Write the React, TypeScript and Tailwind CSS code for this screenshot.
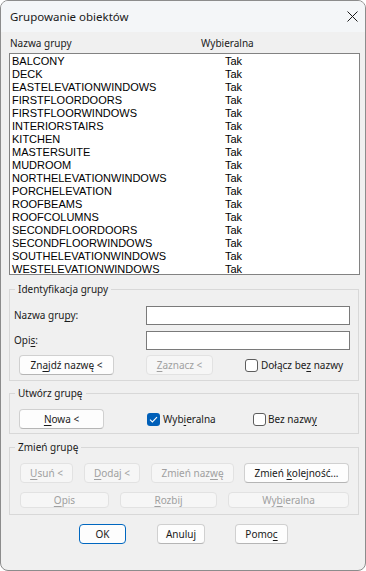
import type { ReactNode } from 'react';

const groups = [
  'BALCONY',
  'DECK',
  'EASTELEVATIONWINDOWS',
  'FIRSTFLOORDOORS',
  'FIRSTFLOORWINDOWS',
  'INTERIORSTAIRS',
  'KITCHEN',
  'MASTERSUITE',
  'MUDROOM',
  'NORTHELEVATIONWINDOWS',
  'PORCHELEVATION',
  'ROOFBEAMS',
  'ROOFCOLUMNS',
  'SECONDFLOORDOORS',
  'SECONDFLOORWINDOWS',
  'SOUTHELEVATIONWINDOWS',
  'WESTELEVATIONWINDOWS',
];

const U = ({ children }: { children: ReactNode }) => (
  <span className="underline underline-offset-[2px]">{children}</span>
);

function Button({
  children,
  className = '',
  disabled,
  primary,
}: {
  children: ReactNode;
  className?: string;
  disabled?: boolean;
  primary?: boolean;
}) {
  const tone = disabled
    ? 'border-[#e2e2e2] bg-[#f6f6f6] text-[#a0a0a0]'
    : primary
      ? 'border-[#0067c0] bg-[#fdfdfd] text-[#1a1a1a]'
      : 'border-[#d0d0d0] border-b-[#b5b5b5] bg-[#fdfdfd] text-[#1a1a1a]';
  return (
    <div className={`flex shrink-0 items-center justify-center rounded-[4px] border leading-none ${tone} ${className}`}>
      <span>{children}</span>
    </div>
  );
}

function Checkbox({ checked }: { checked?: boolean }) {
  return checked ? (
    <div className="flex h-[13px] w-[13px] shrink-0 items-center justify-center rounded-[3px] bg-[#005fb8]">
      <svg width="9" height="7" viewBox="0 0 9 7" fill="none">
        <path d="M1 3.6 L3.4 6 L8 1.2" stroke="white" strokeWidth="1.1" />
      </svg>
    </div>
  ) : (
    <div className="h-[13px] w-[13px] shrink-0 rounded-[3px] border border-[#5d5d5d] bg-white" />
  );
}

function Group({ title, className, children }: { title: string; className: string; children: ReactNode }) {
  return (
    <div className={`relative w-[350px] border border-[#d8d8d8] ${className}`}>
      <span className="absolute left-[5px] top-[-9px] bg-[#f0f0f0] px-[3px] leading-[16px]">{title}</span>
      {children}
    </div>
  );
}

export default function App() {
  return (
    <div className="h-[571px] w-[366px] bg-white font-['Noto_Sans',sans-serif] text-[10px] text-[#1a1a1a]">
      <div className="flex h-full flex-col overflow-hidden rounded-[8px] border border-[#8c8c8c] bg-[#f0f0f0]">
        <div className="flex h-[31px] shrink-0 items-center justify-between bg-[#f4f6f8] pl-[9px] pr-[7px]">
          <span className="text-[11.5px]">Grupowanie obiektów</span>
          <svg width="11" height="11" viewBox="0 0 11 11" fill="none">
            <path d="M0.5 0.5 L10.5 10.5 M10.5 0.5 L0.5 10.5" stroke="#1a1a1a" strokeWidth="1" />
          </svg>
        </div>

        <div className="flex-1 pl-[8px] pt-[2px]">
          <div className="grid h-[19px] grid-cols-[191px_1fr] items-center pl-[1px]">
            <span>Nazwa grupy</span>
            <span>Wybieralna</span>
          </div>

          <div className="h-[222px] w-[351px] border border-[#828282] bg-white pl-[2px] pt-[1px] font-['Liberation_Sans',sans-serif] text-[11px] leading-[13px] text-black">
            {groups.map((name) => (
              <div key={name} className="grid grid-cols-[213px_1fr]">
                <span>{name}</span>
                <span>Tak</span>
              </div>
            ))}
          </div>

          <Group title="Identyfikacja grupy" className="mt-[14px] h-[92px] pl-[4px] pr-[8px] pt-[16px]">
            <div className="flex h-[19px] items-center">
              <span className="w-[132px]">
                Nazwa gru<U>p</U>y:
              </span>
              <div className="h-[19px] w-[204px] border border-[#7a7a7a] bg-white" />
            </div>
            <div className="mt-[6px] flex h-[19px] items-center">
              <span className="w-[132px]">
                Opi<U>s</U>:
              </span>
              <div className="h-[19px] w-[204px] border border-[#7a7a7a] bg-white" />
            </div>
            <div className="mt-[5px] flex h-[20px] items-center pl-[5px]">
              <Button className="h-[20px] w-[95px]">
                Zn<U>a</U>jdź nazwę &lt;
              </Button>
              <Button disabled className="ml-[32px] h-[20px] w-[67px]">
                <U>Z</U>aznacz &lt;
              </Button>
              <div className="ml-[32px] flex items-center">
                <Checkbox />
                <span className="ml-[3px]">
                  Dołącz be<U>z</U> nazwy
                </span>
              </div>
            </div>
          </Group>

          <Group title="Utwórz grupę" className="mt-[12px] h-[41px] pl-[9px] pt-[15px]">
            <div className="flex h-[20px] items-center">
              <Button className="h-[20px] w-[85px]">
                <U>N</U>owa &lt;
              </Button>
              <div className="ml-[43px] flex w-[106px] items-center">
                <Checkbox checked />
                <span className="ml-[3px]">
                  Wyb<U>i</U>eralna
                </span>
              </div>
              <div className="flex items-center">
                <Checkbox />
                <span className="ml-[2px]">
                  Bez nazw<U>y</U>
                </span>
              </div>
            </div>
          </Group>

          <Group title="Zmień grupę" className="mt-[13px] h-[68px] pl-[10px] pt-[15px]">
            <div className="flex h-[20px] items-center gap-[11px]">
              <Button disabled className="h-[20px] w-[53px]">
                <U>U</U>suń &lt;
              </Button>
              <Button disabled className="h-[20px] w-[56px]">
                <U>D</U>odaj &lt;
              </Button>
              <Button disabled className="h-[20px] w-[83px]">
                Zmień naz<U>w</U>ę
              </Button>
              <Button className="ml-[-1px] h-[20px] w-[105px]">
                Zmień <U>k</U>olejność...
              </Button>
            </div>
            <div className="mt-[9px] flex h-[16px] items-center gap-[11px]">
              <Button disabled className="h-[16px] w-[89px]">
                <U>O</U>pis
              </Button>
              <Button disabled className="h-[16px] w-[97px]">
                <U>R</U>ozbij
              </Button>
              <Button disabled className="h-[16px] w-[121px]">
                Wy<U>b</U>ieralna
              </Button>
            </div>
          </Group>

          <div className="mt-[9px] flex h-[20px] items-center pl-[70px]">
            <Button primary className="h-[20px] w-[47px]">
              OK
            </Button>
            <Button className="ml-[31px] h-[20px] w-[48px]">Anuluj</Button>
            <Button className="ml-[30px] h-[20px] w-[53px]">
              Pomo<U>c</U>
            </Button>
          </div>
        </div>
      </div>
    </div>
  );
}
